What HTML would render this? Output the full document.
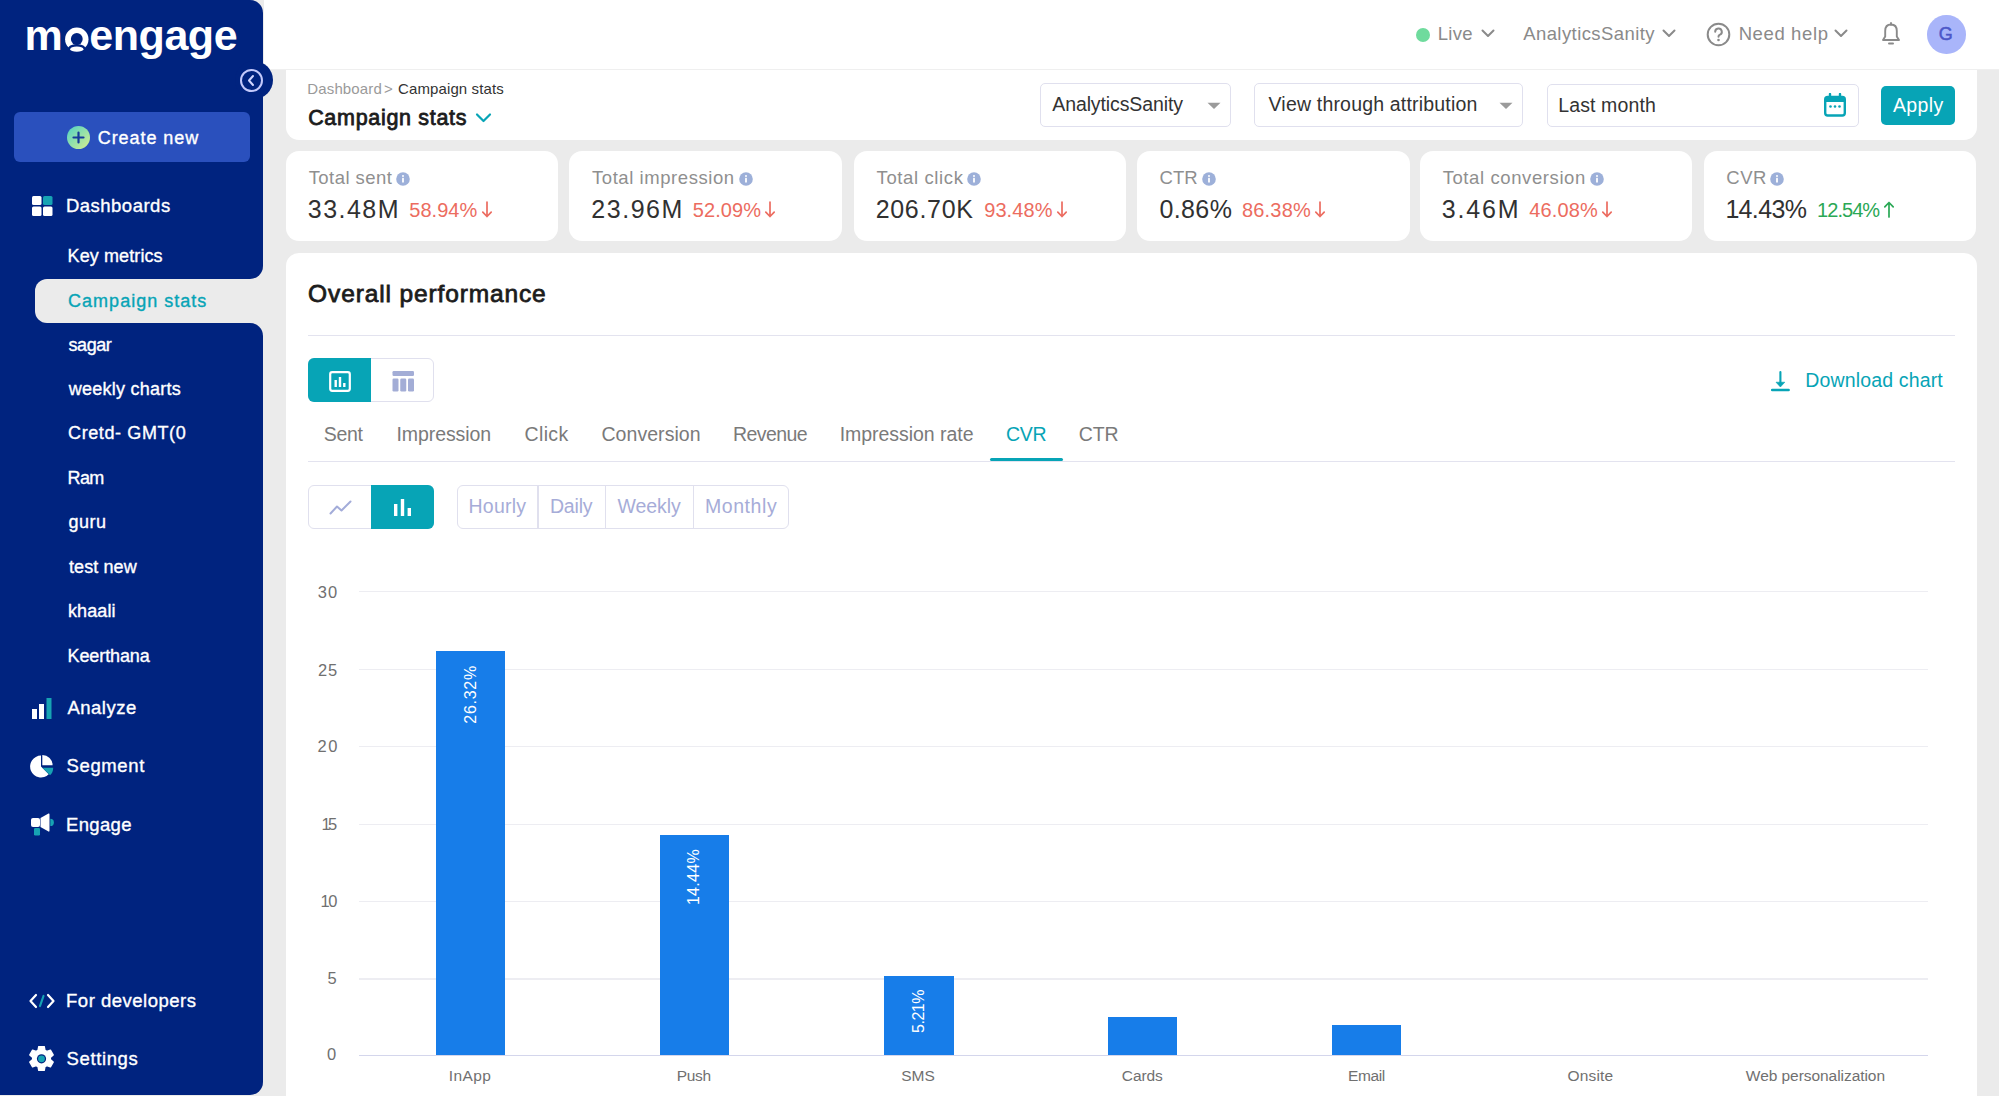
<!DOCTYPE html>
<html><head><meta charset="utf-8"><style>
html,body{margin:0;padding:0;}
body{width:1999px;height:1096px;overflow:hidden;position:relative;background:#ebebeb;font-family:"Liberation Sans", sans-serif;}
.t{position:absolute;white-space:nowrap;line-height:1;font-family:"Liberation Sans", sans-serif;}
</style></head><body>
<div style="position:absolute;left:0;top:0;width:263.4px;height:279px;background:#00237f;border-radius:0 13px 13px 0"></div>
<div style="position:absolute;left:0;top:270px;width:60px;height:62px;background:#00237f"></div>
<div style="position:absolute;left:0;top:323px;width:263.4px;height:772px;background:#00237f;border-radius:0 13px 13px 0"></div>
<div style="position:absolute;left:35px;top:279px;width:250px;height:44px;background:#ebebeb;border-radius:12px 0 0 12px"></div>
<div style="position:absolute;left:264px;top:0;width:1735px;height:69.5px;background:#fff;border-bottom:1.3px solid #efefef;box-sizing:border-box"></div>
<div style="position:absolute;left:235px;top:61px;width:38px;height:38px;border-radius:50%;background:#00237f"></div>
<div style="position:absolute;left:239.5px;top:68.5px;width:23px;height:23px;border-radius:50%;border:2px solid #c3c9fb;box-sizing:border-box"></div>
<svg style="position:absolute;left:239.5px;top:68.5px" width="23" height="23" viewBox="0 0 23 23"><path d="M13 7 L9 11.5 L13 16" fill="none" stroke="#d0d5ff" stroke-width="2" stroke-linecap="round" stroke-linejoin="round"/></svg>
<svg style="position:absolute;left:60px;top:22px" width="34" height="34" viewBox="0 0 34 34"><circle cx="16.8" cy="17.2" r="11.7" fill="#fff"/><circle cx="16.8" cy="17.0" r="5.9" fill="#00237f"/><ellipse cx="16.8" cy="27.5" rx="9.2" ry="5.6" fill="#00237f"/><ellipse cx="16.8" cy="27.2" rx="6.6" ry="2.6" fill="#fff"/></svg>
<div style="position:absolute;left:14px;top:112px;width:236px;height:50px;background:#2a50bd;border-radius:6px"></div>
<div style="position:absolute;left:66.5px;top:126px;width:23px;height:23px;border-radius:50%;background:linear-gradient(135deg,#4fd1c5,#d9f08f)"></div>
<svg style="position:absolute;left:66.5px;top:126px" width="23" height="23" viewBox="0 0 23 23"><path d="M11.5 6.5V16.5M6.5 11.5H16.5" stroke="#163a9a" stroke-width="2.2" stroke-linecap="round"/></svg>
<svg style="position:absolute;left:32px;top:196px" width="21" height="20" viewBox="0 0 21 20"><rect x="0" y="0" width="9.5" height="9" rx="1.5" fill="#fff"/><rect x="11" y="0" width="9.5" height="9" rx="1.5" fill="#17a3b3"/><rect x="0" y="10.5" width="9.5" height="9.5" rx="1.5" fill="#fff"/><rect x="11" y="10.5" width="9.5" height="9.5" rx="1.5" fill="#fff"/></svg>
<svg style="position:absolute;left:32px;top:698px" width="20" height="21" viewBox="0 0 20 21"><rect x="0" y="11" width="5" height="10" fill="#fff"/><rect x="7" y="6" width="5" height="15" fill="#fff"/><rect x="14.5" y="0" width="5" height="21" fill="#17a3b3"/></svg>
<svg style="position:absolute;left:29px;top:754px" width="26" height="26" viewBox="0 0 26 26"><path d="M12 12.5 L12 1.6 A10.9 10.9 0 1 0 19.71 20.21 Z" fill="#fff"/><path d="M13.3 11.2 L13.3 0.9 A10.3 10.3 0 0 1 23.6 11.2 Z" fill="#fff"/><path d="M13.4 13.7 L24.2 13.7 A10.8 10.8 0 0 1 21.04 21.34 Z" fill="#17a3b3"/></svg>
<svg style="position:absolute;left:30px;top:813px" width="24" height="23" viewBox="0 0 24 23"><rect x="1" y="5" width="9" height="9" rx="2" fill="#fff"/><path d="M10.5 5 L18.5 0.5 Q19.5 0 19.5 1.5 L19.5 17.5 Q19.5 19 18.5 18.5 L10.5 14 Z" fill="#fff"/><path d="M20.3 5.8 A3.6 3.6 0 0 1 20.3 13 Z" fill="#17a3b3"/><rect x="4" y="15" width="6" height="7.5" rx="1.2" fill="#17a3b3"/></svg>
<svg style="position:absolute;left:29px;top:993px" width="26" height="16" viewBox="0 0 26 16"><path d="M7 2 L1.5 8 L7 14" fill="none" stroke="#fff" stroke-width="2.2" stroke-linecap="round" stroke-linejoin="round"/><path d="M19 2 L24.5 8 L19 14" fill="none" stroke="#fff" stroke-width="2.2" stroke-linecap="round" stroke-linejoin="round"/><path d="M14.5 3 L11 13" stroke="#17a3b3" stroke-width="2.2" stroke-linecap="round"/></svg>
<svg style="position:absolute;left:29px;top:1046px" width="25" height="25" viewBox="0 0 25 25"><path d="M9.76 0.61 L15.24 0.61 L15.98 4.31 L17.86 5.39 L21.42 4.18 L24.17 8.93 L21.33 11.42 L21.33 13.58 L24.17 16.07 L21.42 20.82 L17.86 19.61 L15.98 20.69 L15.24 24.39 L9.76 24.39 L9.02 20.69 L7.14 19.61 L3.58 20.82 L0.83 16.07 L3.67 13.58 L3.67 11.42 L0.83 8.93 L3.58 4.18 L7.14 5.39 L9.02 4.31 Z" fill="#fff" stroke="#fff" stroke-width="1.4" stroke-linejoin="round"/><circle cx="12.5" cy="12.8" r="4.6" fill="#00237f"/><circle cx="12.5" cy="12.8" r="3.4" fill="#17a3b3"/></svg>
<div style="position:absolute;left:1415.8px;top:27.6px;width:14px;height:14px;border-radius:50%;background:#6fdb9d"></div>
<svg style="position:absolute;left:1480.5px;top:29.3px" width="14" height="9" viewBox="0 0 14 9"><path d="M1.5 1.5 L7 7 L12.5 1.5" fill="none" stroke="#8a8a8a" stroke-width="2" stroke-linecap="round" stroke-linejoin="round"/></svg>
<svg style="position:absolute;left:1661.8px;top:29.3px" width="14" height="9" viewBox="0 0 14 9"><path d="M1.5 1.5 L7 7 L12.5 1.5" fill="none" stroke="#8a8a8a" stroke-width="2" stroke-linecap="round" stroke-linejoin="round"/></svg>
<svg style="position:absolute;left:1834.2px;top:29.3px" width="14" height="9" viewBox="0 0 14 9"><path d="M1.5 1.5 L7 7 L12.5 1.5" fill="none" stroke="#8a8a8a" stroke-width="2" stroke-linecap="round" stroke-linejoin="round"/></svg>
<svg style="position:absolute;left:1705.5px;top:22px" width="25" height="25" viewBox="0 0 25 25"><circle cx="12.5" cy="12.5" r="10.8" fill="none" stroke="#8a8a8a" stroke-width="2"/><path d="M9.2 9.8 A3.3 3.3 0 1 1 13.6 12.9 C12.8 13.3 12.5 13.8 12.5 14.8" fill="none" stroke="#8a8a8a" stroke-width="2" stroke-linecap="round"/><circle cx="12.5" cy="18" r="1.3" fill="#8a8a8a"/></svg>
<svg style="position:absolute;left:1881px;top:22px" width="20" height="24" viewBox="0 0 20 24"><path d="M10 2.5 C6 2.5 4.2 5.5 4.2 9 L4.2 14.5 L2 18 L18 18 L15.8 14.5 L15.8 9 C15.8 5.5 14 2.5 10 2.5 Z" fill="none" stroke="#8a8a8a" stroke-width="1.9" stroke-linejoin="round"/><path d="M10 1 V2.8" stroke="#8a8a8a" stroke-width="1.9" stroke-linecap="round"/><path d="M8 21.5 H12" stroke="#8a8a8a" stroke-width="2" stroke-linecap="round"/></svg>
<div style="position:absolute;left:1927px;top:15.4px;width:38.5px;height:38.5px;border-radius:50%;background:#a9b5fa"></div>
<span class="t" style="left:1935.8px;top:24.5px;font-size:18px;font-weight:400;-webkit-text-stroke:0.5px #4c57c8;color:#4c57c8;width:20px;text-align:center">G</span>
<div style="position:absolute;left:286px;top:69.5px;width:1691px;height:70.3px;background:#fff;border-radius:0 0 13px 13px"></div>
<svg style="position:absolute;left:475px;top:112px" width="17" height="12" viewBox="0 0 17 12"><path d="M2 2.5 L8.5 9 L15 2.5" fill="none" stroke="#07a4b6" stroke-width="2.2" stroke-linecap="round" stroke-linejoin="round"/></svg>
<div style="position:absolute;left:1039.5px;top:82.5px;width:191px;height:44.5px;border:1.3px solid #e0e0ee;border-radius:5px;box-sizing:border-box"></div>
<div style="position:absolute;left:1254px;top:82.5px;width:269px;height:44.5px;border:1.3px solid #e0e0ee;border-radius:5px;box-sizing:border-box"></div>
<svg style="position:absolute;left:1206.5px;top:102px" width="14" height="8" viewBox="0 0 14 8"><path d="M0.5 0.8 L13.5 0.8 L7 7 Z" fill="#9b9b9b"/></svg>
<svg style="position:absolute;left:1499px;top:102px" width="14" height="8" viewBox="0 0 14 8"><path d="M0.5 0.8 L13.5 0.8 L7 7 Z" fill="#9b9b9b"/></svg>
<div style="position:absolute;left:1546.5px;top:83.5px;width:312px;height:43.5px;border:1.3px solid #e0e0ee;border-radius:5px;box-sizing:border-box"></div>
<svg style="position:absolute;left:1823.5px;top:92.5px" width="22" height="24" viewBox="0 0 22 24"><rect x="1.2" y="4" width="19.6" height="18.5" rx="2.5" fill="none" stroke="#07a4b6" stroke-width="2.4"/><rect x="1.2" y="4" width="19.6" height="5" fill="#07a4b6"/><path d="M6 1 V5 M16 1 V5" stroke="#07a4b6" stroke-width="2.4" stroke-linecap="round"/><circle cx="6.5" cy="13.5" r="1.3" fill="#07a4b6"/><circle cx="11" cy="13.5" r="1.3" fill="#07a4b6"/><circle cx="15.5" cy="13.5" r="1.3" fill="#07a4b6"/></svg>
<div style="position:absolute;left:1881px;top:86px;width:73.5px;height:38.8px;background:#07a4b6;border-radius:5px"></div>
<div style="position:absolute;left:286px;top:151.2px;width:272.3px;height:90px;background:#fff;border-radius:13px"></div>
<div style="position:absolute;left:569.3px;top:151.2px;width:272.3px;height:90px;background:#fff;border-radius:13px"></div>
<div style="position:absolute;left:853.9px;top:151.2px;width:272.3px;height:90px;background:#fff;border-radius:13px"></div>
<div style="position:absolute;left:1137.3px;top:151.2px;width:272.3px;height:90px;background:#fff;border-radius:13px"></div>
<div style="position:absolute;left:1420px;top:151.2px;width:272.3px;height:90px;background:#fff;border-radius:13px"></div>
<div style="position:absolute;left:1704.2px;top:151.2px;width:272.3px;height:90px;background:#fff;border-radius:13px"></div>
<svg style="position:absolute;left:396.4px;top:171.8px" width="14" height="14" viewBox="0 0 14 14"><circle cx="7" cy="7" r="6.8" fill="#9db0d9"/><rect x="6.1" y="5.8" width="1.8" height="4.8" rx="0.4" fill="#fff"/><circle cx="7" cy="3.9" r="1" fill="#fff"/></svg>
<svg style="position:absolute;left:738.7px;top:171.8px" width="14" height="14" viewBox="0 0 14 14"><circle cx="7" cy="7" r="6.8" fill="#9db0d9"/><rect x="6.1" y="5.8" width="1.8" height="4.8" rx="0.4" fill="#fff"/><circle cx="7" cy="3.9" r="1" fill="#fff"/></svg>
<svg style="position:absolute;left:967.3px;top:171.8px" width="14" height="14" viewBox="0 0 14 14"><circle cx="7" cy="7" r="6.8" fill="#9db0d9"/><rect x="6.1" y="5.8" width="1.8" height="4.8" rx="0.4" fill="#fff"/><circle cx="7" cy="3.9" r="1" fill="#fff"/></svg>
<svg style="position:absolute;left:1201.9px;top:171.8px" width="14" height="14" viewBox="0 0 14 14"><circle cx="7" cy="7" r="6.8" fill="#9db0d9"/><rect x="6.1" y="5.8" width="1.8" height="4.8" rx="0.4" fill="#fff"/><circle cx="7" cy="3.9" r="1" fill="#fff"/></svg>
<svg style="position:absolute;left:1590px;top:171.8px" width="14" height="14" viewBox="0 0 14 14"><circle cx="7" cy="7" r="6.8" fill="#9db0d9"/><rect x="6.1" y="5.8" width="1.8" height="4.8" rx="0.4" fill="#fff"/><circle cx="7" cy="3.9" r="1" fill="#fff"/></svg>
<svg style="position:absolute;left:1769.9px;top:171.8px" width="14" height="14" viewBox="0 0 14 14"><circle cx="7" cy="7" r="6.8" fill="#9db0d9"/><rect x="6.1" y="5.8" width="1.8" height="4.8" rx="0.4" fill="#fff"/><circle cx="7" cy="3.9" r="1" fill="#fff"/></svg>
<svg style="position:absolute;left:480.6px;top:201px" width="12" height="17" viewBox="0 0 12 17"><path d="M6 1 V15.5 M1.8 11.2 L6 15.5 L10.2 11.2" fill="none" stroke="#ec6c60" stroke-width="1.7" stroke-linecap="round" stroke-linejoin="round"/></svg>
<svg style="position:absolute;left:764.2px;top:201px" width="12" height="17" viewBox="0 0 12 17"><path d="M6 1 V15.5 M1.8 11.2 L6 15.5 L10.2 11.2" fill="none" stroke="#ec6c60" stroke-width="1.7" stroke-linecap="round" stroke-linejoin="round"/></svg>
<svg style="position:absolute;left:1055.7px;top:201px" width="12" height="17" viewBox="0 0 12 17"><path d="M6 1 V15.5 M1.8 11.2 L6 15.5 L10.2 11.2" fill="none" stroke="#ec6c60" stroke-width="1.7" stroke-linecap="round" stroke-linejoin="round"/></svg>
<svg style="position:absolute;left:1313.9px;top:201px" width="12" height="17" viewBox="0 0 12 17"><path d="M6 1 V15.5 M1.8 11.2 L6 15.5 L10.2 11.2" fill="none" stroke="#ec6c60" stroke-width="1.7" stroke-linecap="round" stroke-linejoin="round"/></svg>
<svg style="position:absolute;left:1601px;top:201px" width="12" height="17" viewBox="0 0 12 17"><path d="M6 1 V15.5 M1.8 11.2 L6 15.5 L10.2 11.2" fill="none" stroke="#ec6c60" stroke-width="1.7" stroke-linecap="round" stroke-linejoin="round"/></svg>
<svg style="position:absolute;left:1883.4px;top:201px" width="12" height="17" viewBox="0 0 12 17"><path d="M6 16 V1.5 M1.8 5.8 L6 1.5 L10.2 5.8" fill="none" stroke="#2aa855" stroke-width="1.7" stroke-linecap="round" stroke-linejoin="round"/></svg>
<div style="position:absolute;left:286px;top:253.2px;width:1690.5px;height:900px;background:#fff;border-radius:13px"></div>
<div style="position:absolute;left:308px;top:334.5px;width:1647px;height:1.5px;background:#e3e3ef"></div>
<div style="position:absolute;left:308px;top:358px;width:125.5px;height:44px;border:1.3px solid #e0e0ee;border-radius:6px;box-sizing:border-box"></div>
<div style="position:absolute;left:308px;top:358px;width:63px;height:44px;background:#07a4b6;border-radius:6px 0 0 6px"></div>
<svg style="position:absolute;left:329px;top:370.5px" width="22" height="21" viewBox="0 0 22 21"><rect x="1.2" y="1.2" width="19.6" height="18.6" rx="2" fill="none" stroke="#fff" stroke-width="2.2"/><rect x="5.5" y="9" width="2.4" height="7" fill="#fff"/><rect x="9.8" y="6" width="2.4" height="10" fill="#fff"/><rect x="14.1" y="12" width="2.4" height="4" fill="#fff"/></svg>
<svg style="position:absolute;left:392px;top:370.5px" width="23" height="21" viewBox="0 0 23 21"><rect x="0.5" y="0" width="21.5" height="5" rx="1.2" fill="#a3add6"/><rect x="0.5" y="7.5" width="6" height="13" rx="1.2" fill="#a3add6"/><rect x="8.25" y="7.5" width="6" height="13" rx="1.2" fill="#a3add6"/><rect x="16" y="7.5" width="6" height="13" rx="1.2" fill="#a3add6"/></svg>
<svg style="position:absolute;left:1769.8px;top:369.5px" width="20" height="22" viewBox="0 0 20 22"><path d="M10.4 2 V13" stroke="#07a4b6" stroke-width="2.1" stroke-linecap="round"/><path d="M6 12.2 L14.8 12.2 L10.4 17 Z" fill="#07a4b6" stroke="#07a4b6" stroke-width="0.6" stroke-linejoin="round"/><path d="M2.2 20.1 H18.6" stroke="#07a4b6" stroke-width="2.5" stroke-linecap="round"/></svg>
<div style="position:absolute;left:308px;top:460.8px;width:1647px;height:1.5px;background:#e3e3ef"></div>
<div style="position:absolute;left:990px;top:457.8px;width:73px;height:3px;background:#07a4b6;border-radius:2px"></div>
<div style="position:absolute;left:308.4px;top:484.6px;width:125.6px;height:44.1px;border:1.3px solid #e0e0ee;border-radius:6px;box-sizing:border-box"></div>
<div style="position:absolute;left:371px;top:484.6px;width:63px;height:44.1px;background:#07a4b6;border-radius:0 6px 6px 0"></div>
<svg style="position:absolute;left:329px;top:499.5px" width="23" height="15" viewBox="0 0 23 15"><path d="M1.5 13.5 L8 6.5 L12.5 10.5 L21.5 1.5" fill="none" stroke="#a3acd9" stroke-width="2" stroke-linecap="round" stroke-linejoin="round"/></svg>
<svg style="position:absolute;left:393px;top:497.5px" width="19" height="18" viewBox="0 0 19 18"><rect x="1" y="6" width="3.4" height="12" fill="#fff"/><rect x="7.8" y="1" width="3.4" height="17" fill="#fff"/><rect x="14.6" y="10" width="3.4" height="8" fill="#fff"/></svg>
<div style="position:absolute;left:457.1px;top:484.6px;width:332.2px;height:44.1px;border:1.3px solid #e0e0ee;border-radius:6px;box-sizing:border-box"></div>
<div style="position:absolute;left:537.4px;top:485px;width:1.3px;height:43.4px;background:#e0e0ee"></div>
<div style="position:absolute;left:605.1px;top:485px;width:1.3px;height:43.4px;background:#e0e0ee"></div>
<div style="position:absolute;left:692.6999999999999px;top:485px;width:1.3px;height:43.4px;background:#e0e0ee"></div>
<div style="position:absolute;left:358.5px;top:591.0999999999999px;width:1569px;height:1.3px;background:#ededf2"></div>
<div style="position:absolute;left:358.5px;top:668.5px;width:1569px;height:1.3px;background:#ededf2"></div>
<div style="position:absolute;left:358.5px;top:745.9px;width:1569px;height:1.3px;background:#ededf2"></div>
<div style="position:absolute;left:358.5px;top:823.8px;width:1569px;height:1.3px;background:#ededf2"></div>
<div style="position:absolute;left:358.5px;top:900.8px;width:1569px;height:1.3px;background:#ededf2"></div>
<div style="position:absolute;left:358.5px;top:978.3px;width:1569px;height:1.3px;background:#ededf2"></div>
<div style="position:absolute;left:358.5px;top:1054.8999999999999px;width:1569px;height:1.6px;background:#d4d6ec"></div>
<div style="position:absolute;left:436px;top:651.2px;width:69.19999999999999px;height:404.20000000000005px;background:#177de9"></div>
<div class="t" style="left:410.6px;top:665.2px;width:120px;height:0;"><span style="position:absolute;right:60px;top:0;transform-origin:100% 0;transform:rotate(-90deg) translate(0,-50%);font-size:16px;line-height:1;color:#fff;white-space:nowrap;letter-spacing:0.75px">26.32%</span></div>
<div style="position:absolute;left:659.6px;top:834.6px;width:69.10000000000002px;height:220.80000000000007px;background:#177de9"></div>
<div class="t" style="left:634.1500000000001px;top:848.6px;width:120px;height:0;"><span style="position:absolute;right:60px;top:0;transform-origin:100% 0;transform:rotate(-90deg) translate(0,-50%);font-size:16px;line-height:1;color:#fff;white-space:nowrap;letter-spacing:0.3px">14.44%</span></div>
<div style="position:absolute;left:884.3px;top:976.2px;width:69.30000000000007px;height:79.20000000000005px;background:#177de9"></div>
<div class="t" style="left:858.95px;top:990.2px;width:120px;height:0;"><span style="position:absolute;right:60px;top:0;transform-origin:100% 0;transform:rotate(-90deg) translate(0,-50%);font-size:16px;line-height:1;color:#fff;white-space:nowrap;letter-spacing:-0.5px">5.21%</span></div>
<div style="position:absolute;left:1108.2px;top:1017.2px;width:68.89999999999986px;height:38.200000000000045px;background:#177de9"></div>
<div style="position:absolute;left:1331.5px;top:1024.9px;width:69.40000000000009px;height:30.5px;background:#177de9"></div>
<span class="t" id="createnew" style="left:97.77px;top:128.90px;font-size:18.00px;font-weight:400;color:#ffffff;letter-spacing:0.924px;-webkit-text-stroke:0.35px #ffffff;">Create new</span>
<span class="t" id="dashboards" style="left:65.89px;top:196.78px;font-size:18.50px;font-weight:400;color:#ffffff;letter-spacing:0.503px;-webkit-text-stroke:0.35px #ffffff;">Dashboards</span>
<span class="t" id="sub0" style="left:67.56px;top:247.20px;font-size:18.00px;font-weight:400;color:#ffffff;letter-spacing:0.105px;-webkit-text-stroke:0.35px #ffffff;">Key metrics</span>
<span class="t" id="sub1" style="left:68.06px;top:292.30px;font-size:18.00px;font-weight:400;color:#07a4b6;letter-spacing:1.019px;-webkit-text-stroke:0.35px #07a4b6;">Campaign stats</span>
<span class="t" id="sub2" style="left:68.53px;top:336.20px;font-size:18.00px;font-weight:400;color:#ffffff;letter-spacing:-0.449px;-webkit-text-stroke:0.35px #ffffff;">sagar</span>
<span class="t" id="sub3" style="left:68.80px;top:380.20px;font-size:18.00px;font-weight:400;color:#ffffff;letter-spacing:0.234px;-webkit-text-stroke:0.35px #ffffff;">weekly charts</span>
<span class="t" id="sub4" style="left:68.06px;top:424.30px;font-size:18.00px;font-weight:400;color:#ffffff;letter-spacing:0.607px;-webkit-text-stroke:0.35px #ffffff;">Cretd- GMT(0</span>
<span class="t" id="sub5" style="left:67.56px;top:468.80px;font-size:18.00px;font-weight:400;color:#ffffff;letter-spacing:-0.594px;-webkit-text-stroke:0.35px #ffffff;">Ram</span>
<span class="t" id="sub6" style="left:68.49px;top:513.20px;font-size:18.00px;font-weight:400;color:#ffffff;letter-spacing:0.464px;-webkit-text-stroke:0.35px #ffffff;">guru</span>
<span class="t" id="sub7" style="left:68.93px;top:557.60px;font-size:18.00px;font-weight:400;color:#ffffff;letter-spacing:0.101px;-webkit-text-stroke:0.35px #ffffff;">test new</span>
<span class="t" id="sub8" style="left:67.90px;top:602.10px;font-size:18.00px;font-weight:400;color:#ffffff;letter-spacing:0.116px;-webkit-text-stroke:0.35px #ffffff;">khaali</span>
<span class="t" id="sub9" style="left:67.56px;top:646.90px;font-size:18.00px;font-weight:400;color:#ffffff;letter-spacing:-0.104px;-webkit-text-stroke:0.35px #ffffff;">Keerthana</span>
<span class="t" id="analyze" style="left:67.38px;top:699.38px;font-size:18.50px;font-weight:400;color:#ffffff;letter-spacing:0.525px;-webkit-text-stroke:0.35px #ffffff;">Analyze</span>
<span class="t" id="segment" style="left:66.57px;top:757.07px;font-size:18.50px;font-weight:400;color:#ffffff;letter-spacing:0.617px;-webkit-text-stroke:0.35px #ffffff;">Segment</span>
<span class="t" id="engage" style="left:66.06px;top:815.88px;font-size:18.50px;font-weight:400;color:#ffffff;letter-spacing:0.338px;-webkit-text-stroke:0.35px #ffffff;">Engage</span>
<span class="t" id="fordev" style="left:66.06px;top:991.98px;font-size:18.50px;font-weight:400;color:#ffffff;letter-spacing:0.504px;-webkit-text-stroke:0.35px #ffffff;">For developers</span>
<span class="t" id="settings" style="left:66.57px;top:1050.48px;font-size:18.50px;font-weight:400;color:#ffffff;letter-spacing:0.614px;-webkit-text-stroke:0.35px #ffffff;">Settings</span>
<span class="t" id="live" style="left:1437.63px;top:24.67px;font-size:18.50px;font-weight:400;color:#8a8a8a;letter-spacing:0.344px;">Live</span>
<span class="t" id="hdr_as" style="left:1523.19px;top:24.67px;font-size:18.50px;font-weight:400;color:#8a8a8a;letter-spacing:0.421px;">AnalyticsSanity</span>
<span class="t" id="needhelp" style="left:1738.63px;top:24.98px;font-size:18.50px;font-weight:400;color:#8a8a8a;letter-spacing:0.620px;">Need help</span>
<span class="t" id="bc1" style="left:307.32px;top:81.25px;font-size:15.00px;font-weight:400;color:#9a9a9a;letter-spacing:0.136px;">Dashboard</span>
<span class="t" id="bc2" style="left:383.97px;top:81.25px;font-size:15.00px;font-weight:400;color:#9a9a9a;letter-spacing:0.000px;">&gt;</span>
<span class="t" id="bc3" style="left:398.05px;top:81.25px;font-size:15.00px;font-weight:400;color:#333333;letter-spacing:0.109px;">Campaign stats</span>
<span class="t" id="title" style="left:308.16px;top:108.22px;font-size:21.50px;font-weight:400;color:#1c1c1c;letter-spacing:0.692px;-webkit-text-stroke:0.8px #1c1c1c;">Campaign stats</span>
<span class="t" id="sel1" style="left:1052.27px;top:94.72px;font-size:19.50px;font-weight:400;color:#333333;letter-spacing:-0.106px;">AnalyticsSanity</span>
<span class="t" id="sel2" style="left:1268.53px;top:94.72px;font-size:19.50px;font-weight:400;color:#333333;letter-spacing:0.187px;">View through attribution</span>
<span class="t" id="lastmonth" style="left:1558.22px;top:96.02px;font-size:19.50px;font-weight:400;color:#333333;letter-spacing:0.121px;">Last month</span>
<span class="t" id="apply" style="left:1892.90px;top:96.02px;font-size:19.50px;font-weight:400;color:#ffffff;letter-spacing:0.425px;">Apply</span>
<span class="t" id="clab0" style="left:308.65px;top:168.58px;font-size:18.50px;font-weight:400;color:#8f8f8f;letter-spacing:0.459px;">Total sent</span>
<span class="t" id="cval0" style="left:307.85px;top:196.55px;font-size:25.00px;font-weight:400;color:#313131;letter-spacing:1.451px;">33.48M</span>
<span class="t" id="cpct0" style="left:409.24px;top:199.70px;font-size:20.00px;font-weight:400;color:#ec6c60;letter-spacing:0.051px;">58.94%</span>
<span class="t" id="clab1" style="left:591.96px;top:168.58px;font-size:18.50px;font-weight:400;color:#8f8f8f;letter-spacing:0.569px;">Total impression</span>
<span class="t" id="cval1" style="left:591.23px;top:196.55px;font-size:25.00px;font-weight:400;color:#313131;letter-spacing:1.551px;">23.96M</span>
<span class="t" id="cpct1" style="left:692.76px;top:199.70px;font-size:20.00px;font-weight:400;color:#ec6c60;letter-spacing:0.081px;">52.09%</span>
<span class="t" id="clab2" style="left:876.50px;top:168.58px;font-size:18.50px;font-weight:400;color:#8f8f8f;letter-spacing:0.626px;">Total click</span>
<span class="t" id="cval2" style="left:875.67px;top:196.55px;font-size:25.00px;font-weight:400;color:#313131;letter-spacing:0.697px;">206.70K</span>
<span class="t" id="cpct2" style="left:984.21px;top:199.70px;font-size:20.00px;font-weight:400;color:#ec6c60;letter-spacing:0.085px;">93.48%</span>
<span class="t" id="clab3" style="left:1159.52px;top:168.58px;font-size:18.50px;font-weight:400;color:#8f8f8f;letter-spacing:0.094px;">CTR</span>
<span class="t" id="cval3" style="left:1159.44px;top:196.55px;font-size:25.00px;font-weight:400;color:#313131;letter-spacing:0.383px;">0.86%</span>
<span class="t" id="cpct3" style="left:1242.03px;top:199.70px;font-size:20.00px;font-weight:400;color:#ec6c60;letter-spacing:0.178px;">86.38%</span>
<span class="t" id="clab4" style="left:1442.65px;top:168.58px;font-size:18.50px;font-weight:400;color:#8f8f8f;letter-spacing:0.596px;">Total conversion</span>
<span class="t" id="cval4" style="left:1441.85px;top:196.55px;font-size:25.00px;font-weight:400;color:#313131;letter-spacing:1.835px;">3.46M</span>
<span class="t" id="cpct4" style="left:1529.22px;top:199.70px;font-size:20.00px;font-weight:400;color:#ec6c60;letter-spacing:0.142px;">46.08%</span>
<span class="t" id="clab5" style="left:1726.36px;top:168.58px;font-size:18.50px;font-weight:400;color:#8f8f8f;letter-spacing:0.459px;">CVR</span>
<span class="t" id="cval5" style="left:1725.38px;top:196.55px;font-size:25.00px;font-weight:400;color:#313131;letter-spacing:-0.657px;">14.43%</span>
<span class="t" id="cpct5" style="left:1817.07px;top:199.70px;font-size:20.00px;font-weight:400;color:#2aa855;letter-spacing:-0.962px;">12.54%</span>
<span class="t" id="overall" style="left:308.10px;top:282.18px;font-size:24.50px;font-weight:400;color:#1c1c1c;letter-spacing:0.869px;-webkit-text-stroke:0.8px #1c1c1c;">Overall performance</span>
<span class="t" id="download" style="left:1805.22px;top:371.03px;font-size:19.50px;font-weight:400;color:#07a4b6;letter-spacing:0.153px;">Download chart</span>
<span class="t" id="tab0" style="left:323.87px;top:424.93px;font-size:19.50px;font-weight:400;color:#7a7a7a;letter-spacing:-0.335px;">Sent</span>
<span class="t" id="tab1" style="left:396.39px;top:424.93px;font-size:19.50px;font-weight:400;color:#7a7a7a;letter-spacing:-0.061px;">Impression</span>
<span class="t" id="tab2" style="left:524.57px;top:424.93px;font-size:19.50px;font-weight:400;color:#7a7a7a;letter-spacing:0.344px;">Click</span>
<span class="t" id="tab3" style="left:601.44px;top:424.93px;font-size:19.50px;font-weight:400;color:#7a7a7a;letter-spacing:0.056px;">Conversion</span>
<span class="t" id="tab4" style="left:732.98px;top:424.93px;font-size:19.50px;font-weight:400;color:#7a7a7a;letter-spacing:-0.589px;">Revenue</span>
<span class="t" id="tab5" style="left:839.69px;top:424.93px;font-size:19.50px;font-weight:400;color:#7a7a7a;letter-spacing:-0.040px;">Impression rate</span>
<span class="t" id="tab6" style="left:1006.07px;top:424.93px;font-size:19.50px;font-weight:400;color:#07a4b6;letter-spacing:-0.365px;">CVR</span>
<span class="t" id="tab7" style="left:1078.75px;top:424.93px;font-size:19.50px;font-weight:400;color:#7a7a7a;letter-spacing:-0.162px;">CTR</span>
<span class="t" id="per0" style="left:468.55px;top:496.82px;font-size:19.50px;font-weight:400;color:#a6acd8;letter-spacing:0.208px;">Hourly</span>
<span class="t" id="per1" style="left:549.98px;top:496.82px;font-size:19.50px;font-weight:400;color:#a6acd8;letter-spacing:-0.200px;">Daily</span>
<span class="t" id="per2" style="left:617.42px;top:496.82px;font-size:19.50px;font-weight:400;color:#a6acd8;letter-spacing:-0.023px;">Weekly</span>
<span class="t" id="per3" style="left:704.98px;top:496.82px;font-size:19.50px;font-weight:400;color:#a6acd8;letter-spacing:0.568px;">Monthly</span>
<span class="t" id="y0" style="left:317.82px;top:584.18px;font-size:16.50px;font-weight:400;color:#707070;letter-spacing:1.118px;">30</span>
<span class="t" id="y1" style="left:318.04px;top:661.88px;font-size:16.50px;font-weight:400;color:#707070;letter-spacing:0.910px;">25</span>
<span class="t" id="y2" style="left:317.55px;top:738.48px;font-size:16.50px;font-weight:400;color:#707070;letter-spacing:1.618px;">20</span>
<span class="t" id="y3" style="left:321.56px;top:816.18px;font-size:16.50px;font-weight:400;color:#707070;letter-spacing:-2.608px;">15</span>
<span class="t" id="y4" style="left:320.49px;top:892.88px;font-size:16.50px;font-weight:400;color:#707070;letter-spacing:-1.320px;">10</span>
<span class="t" id="y5" style="left:327.51px;top:970.18px;font-size:16.50px;font-weight:400;color:#707070;letter-spacing:0.000px;">5</span>
<span class="t" id="y6" style="left:327.02px;top:1046.47px;font-size:16.50px;font-weight:400;color:#707070;letter-spacing:0.000px;">0</span>
<span class="t" id="x0" style="left:448.83px;top:1068.33px;font-size:15.50px;font-weight:400;color:#707070;letter-spacing:0.372px;">InApp</span>
<span class="t" id="x1" style="left:676.86px;top:1068.33px;font-size:15.50px;font-weight:400;color:#707070;letter-spacing:-0.361px;">Push</span>
<span class="t" id="x2" style="left:901.31px;top:1068.33px;font-size:15.50px;font-weight:400;color:#707070;letter-spacing:-0.048px;">SMS</span>
<span class="t" id="x3" style="left:1121.87px;top:1068.33px;font-size:15.50px;font-weight:400;color:#707070;letter-spacing:-0.089px;">Cards</span>
<span class="t" id="x4" style="left:1348.00px;top:1068.33px;font-size:15.50px;font-weight:400;color:#707070;letter-spacing:-0.414px;">Email</span>
<span class="t" id="x5" style="left:1567.58px;top:1068.33px;font-size:15.50px;font-weight:400;color:#707070;letter-spacing:0.138px;">Onsite</span>
<span class="t" id="x6" style="left:1745.85px;top:1068.33px;font-size:15.50px;font-weight:400;color:#707070;letter-spacing:-0.053px;">Web personalization</span>
<span class="t" id="logo_m" style="left:24.44px;top:13.65px;font-size:43.00px;font-weight:700;color:#ffffff;letter-spacing:0.000px;">m</span>
<span class="t" id="logo_e" style="left:89.36px;top:13.95px;font-size:43.00px;font-weight:700;color:#ffffff;letter-spacing:-0.469px;">engage</span>
</body></html>
